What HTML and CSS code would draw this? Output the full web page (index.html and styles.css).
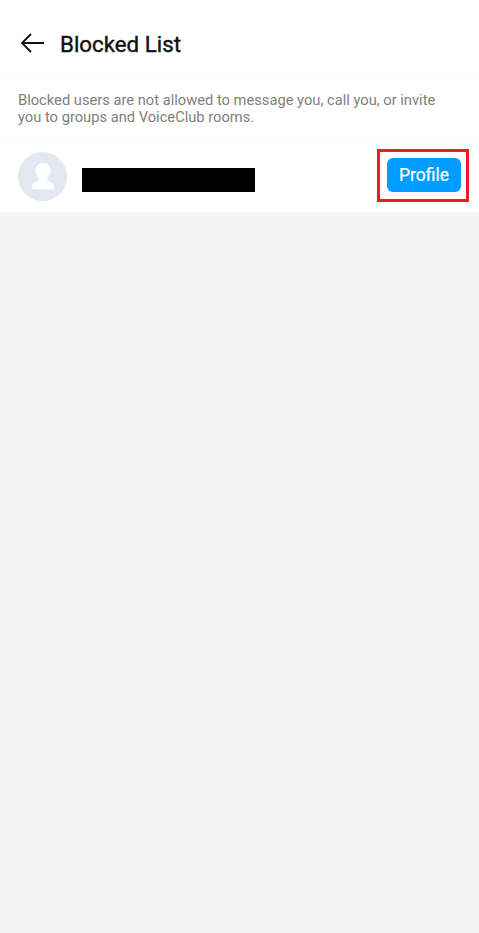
FILE: index.html
```html
<!DOCTYPE html>
<html lang="en">

<head>
  <meta charset="UTF-8" />
  <title>Blocked List</title>
  <link rel="stylesheet" href="styles.css">
</head>

<body>

  <div class="header">
    <svg class="back-icon" width="24" height="20" viewBox="0 0 24 20">
      <path d="M24 10H2M11 1l-9 9 9 9" fill="none" stroke="#111" stroke-width="1.8" />
    </svg>
    <h1>Blocked List</h1>
  </div>

  <p class="note">Blocked users are not allowed to message you, call you, or invite<br>you to groups and VoiceClub rooms.</p>

  <div class="user-row">
    <div class="avatar">
      <svg width="22" height="27" viewBox="0 0 22 27">
        <path d="M11 0C6.500 0 3.500 3 3.500 8c0 3 1.500 5.500 3 7v2c0 1-1.500 1.500-3.500 2.500S0 21.500 0 23.500V25c0 1 .5 1.500 1.500 1.500h19c1 0 1.500-.5 1.500-1.500v-1.500c0-2-1-3-3-4s-3.500-1.500-3.500-2.500v-2c1.500-1.500 3-4 3-7 0-5-3-8-7.500-8z" fill="#fff" />
      </svg>
    </div>
    <div class="name-redacted"></div>
    <div class="profile-box">
      <button class="profile-btn">Profile</button>
    </div>
  </div>

</body>

</html>
```

FILE: styles.css
```css
body {
  margin: 0;
  background: #f4f4f4;
  font-family: Roboto, "Liberation Sans", sans-serif;
}

.header {
  display: flex;
  align-items: center;
  height: 77px;
  padding: 11px 0 0 20px;
  background: #fff;
  border-bottom: 1px solid #f6f7f7;
  box-sizing: border-box;
}

.back-icon {
  margin-right: 16px;
  margin-top: -1px;
}

h1 {
  margin: 0;
  font-size: 22.300px;
  font-weight: 400;
  color: #111;
  -webkit-text-stroke: 0.400px #111;
}

.note {
  margin: 0;
  padding: 15px 18px 0;
  height: 63px;
  box-sizing: border-box;
  background: #fff;
  border-bottom: 1px solid #f6f7f7;
  font-size: 14.700px;
  line-height: 17px;
  color: #808080;
}

.user-row {
  display: flex;
  align-items: center;
  height: 72px;
  padding-left: 18px;
  background: #fff;
}

.avatar {
  display: flex;
  align-items: center;
  justify-content: center;
  width: 49px;
  height: 49px;
  border-radius: 50%;
  background: #e1e8ef;
}

.name-redacted {
  width: 173px;
  height: 24px;
  margin-left: 15px;
  margin-top: 7px;
  background: #000;
}

.profile-box {
  display: flex;
  align-items: center;
  justify-content: center;
  width: 92px;
  height: 53px;
  padding-left: 2px;
  margin-left: auto;
  margin-right: 10px;
  margin-bottom: 2px;
  border: 3px solid #ed1c24;
  box-sizing: border-box;
}

.profile-btn {
  width: 74px;
  height: 34px;
  padding: 0;
  border: 0;
  border-radius: 6px;
  background: #009cff;
  color: #fff;
  font-family: Roboto, "Liberation Sans", sans-serif;
  font-size: 17.500px;
  font-weight: 400;
  -webkit-text-stroke: 0.200px #fff;
}
```
